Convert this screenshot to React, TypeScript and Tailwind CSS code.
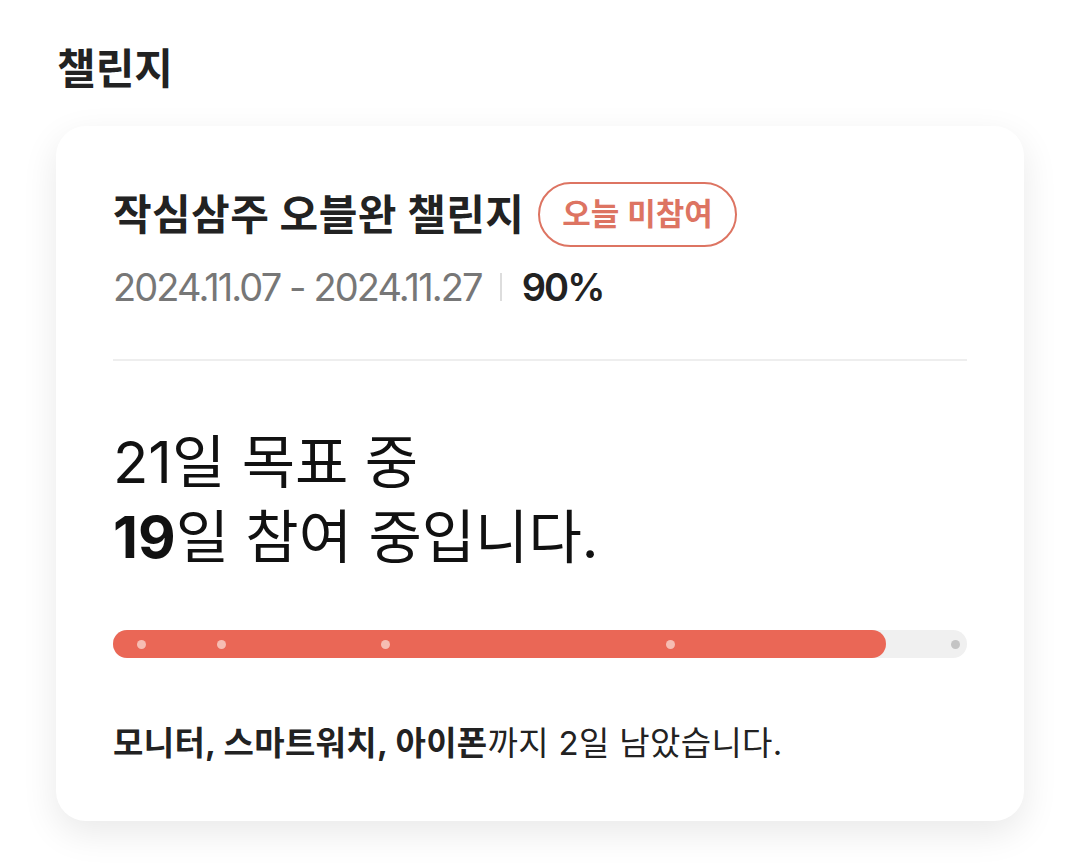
import React from 'react'

const FONT = { fontFamily: 'Inter, "Noto Sans CJK KR", sans-serif' }

const DOTS = [140, 220, 384, 669]

export default function App() {
  const barLeft = 112
  const barWidth = 856
  return (
    <div className="w-[1080px] h-[863px] bg-white overflow-hidden" style={FONT}>
      <div className="pl-[57px] pt-[40px]">
        <h1 className="text-[42px] leading-[58px] font-bold text-[#222]">챌린지</h1>
      </div>

      <div className="mx-[56px] mt-[28px] rounded-[30px] bg-white shadow-[0_12px_36px_rgba(0,0,0,0.09)] px-[57px] pt-[56px] pb-[53px]">
        <div className="flex items-center gap-[14px]">
          <span className="text-[42px] leading-[56px] font-bold text-[#222] tracking-[0.01em]">작심삼주 오블완 챌린지</span>
          <span className="h-[65px] px-[22px] rounded-full border-[2.5px] border-[#dd7462] text-[#dd7462] text-[31px] font-semibold flex items-center">오늘 미참여</span>
        </div>
        <div className="mt-[16px] flex items-center text-[38px] leading-[48px] tracking-[-0.05em]">
          <span className="text-[#777]">2024.11.07 - 2024.11.27</span>
          <span className="ml-[18px] mr-[20px] w-[2px] h-[28px] bg-[#ddd]" />
          <span className="font-semibold text-[#222]">90%</span>
        </div>

        <div className="mt-[48px] h-[2px] bg-[#eeeeee]" />

        <div className="mt-[64px] text-[58px] leading-[75px] text-[#111]">
          <p>21일 목표 중</p>
          <p><span className="font-bold">19</span>일 참여 중입니다.</p>
        </div>

        <div className="mt-[55px] relative h-[28px] rounded-full bg-[#f0f0f0]">
          <div className="absolute left-0 top-0 h-full w-[773px] rounded-full bg-[#ea6756]" />
          {DOTS.map(x => (
            <span key={x} className="absolute top-[10px] w-[9px] h-[9px] rounded-full bg-[#f6bdb3]" style={{ left: x - barLeft - 4 }} />
          ))}
          <span className="absolute top-[10px] w-[9px] h-[9px] rounded-full bg-[#c4c4c4]" style={{ left: barWidth - 14 - 4 }} />
        </div>

        <p className="mt-[60px] text-[33px] leading-[50px] text-[#222] tracking-[0.01em]">
          <span className="font-bold">모니터, 스마트워치, 아이폰</span>까지 2일 남았습니다.
        </p>
      </div>
    </div>
  )
}
